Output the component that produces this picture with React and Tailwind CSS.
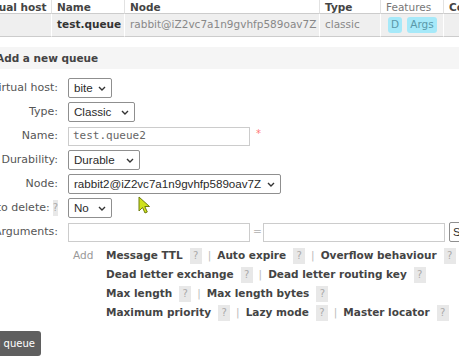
import React from "react";

const Chevron = () => (
  <svg width="8" height="5" viewBox="0 0 8 5" className="shrink-0">
    <path d="M1 1 L4 4 L7 1" fill="none" stroke="#333" strokeWidth="1.4" />
  </svg>
);

const Select = ({ children, w }) => (
  <div
    className={`flex h-[20px] items-center justify-between rounded-[2px] border border-[#8f8f8f] bg-white pl-[5px] pr-[5px] font-['Liberation_Sans',sans-serif] text-[11.6px] whitespace-nowrap text-[#2a2a2a] ${w}`}
  >
    <span>{children}</span>
    <Chevron />
  </div>
);

const Help = () => (
  <span className="inline-block h-[16px] w-[12px] bg-[#e8e8e8] text-center text-[10px] leading-[16px] font-normal text-[#aaa]">
    ?
  </span>
);

const Opt = ({ label }) => (
  <span className="flex items-center gap-[7px]">
    <span className="font-bold text-[#444]">{label}</span>
    <Help />
  </span>
);

const Sep = () => <span className="mx-[6px] text-[#bbb]">|</span>;

const Row = ({ label, help, children }) => (
  <div className="flex h-[24px] items-center">
    <div className="flex w-[58px] shrink-0 items-center justify-end gap-[3px] whitespace-nowrap text-[11px] text-[#555]">
      <span>{label}</span>
      {help && <Help />}
    </div>
    <div className="ml-[10px] flex items-center">{children}</div>
  </div>
);

const head = "h-[14px] leading-[14px] pl-[5px] border-r border-[#e2e2e2] border-b border-b-[#ccc] whitespace-nowrap";
const cell = "h-[23px] flex items-center pl-[5px] bg-[#efefef] border-r border-white border-b border-b-[#ccc] whitespace-nowrap";

export default function App() {
  return (
    <div className="relative h-[358px] w-[459px] overflow-hidden bg-white font-['DejaVu_Sans',sans-serif] text-[10.5px]">
      {/* queue table */}
      <div className="-ml-[28px] grid w-[520px] grid-cols-[80px_73px_195px_61px_63px_48px]">
        <div className={`${head} font-bold text-[#444]`}>Virtual host</div>
        <div className={`${head} font-bold text-[#444]`}>Name</div>
        <div className={`${head} font-bold text-[#444]`}>Node</div>
        <div className={`${head} font-bold text-[#444]`}>Type</div>
        <div className={`${head} text-[#777]`}>Features</div>
        <div className={`${head} font-bold text-[#444]`}>Consumers</div>

        <div className={cell}></div>
        <div className={`${cell} font-bold text-[#333]`}>test.queue</div>
        <div className={`${cell} text-[#888]`}>rabbit@iZ2vc7a1n9gvhfp589oav7Z</div>
        <div className={`${cell} text-[#888]`}>classic</div>
        <div className={`${cell} gap-[5px] pl-[7px]`}>
          <span className="flex h-[16px] w-[14px] items-center justify-center rounded-[3px] bg-[#a6e9f9] text-[#5a98a8]">D</span>
          <span className="flex h-[16px] w-[30px] items-center justify-center rounded-[3px] bg-[#a6e9f9] text-[#5a98a8]">Args</span>
        </div>
        <div className={cell}></div>
      </div>

      {/* section heading */}
      <div className="mt-[10px] flex h-[22px] items-center bg-[#f5f5f5] pt-[2px]">
        <span className="-ml-[4px] font-bold text-[#444]">Add a new queue</span>
      </div>

      {/* form */}
      <div className="mt-[7px]">
        <Row label="Virtual host:">
          <Select w="w-[44px]">bite</Select>
        </Row>
        <Row label="Type:">
          <Select w="w-[67px]">Classic</Select>
        </Row>
        <Row label="Name:">
          <div className="flex h-[19px] w-[182px] items-center border border-[#ccc] pl-[4px] font-['DejaVu_Sans_Mono',monospace] text-[11px] text-[#666]">
            test.queue2
          </div>
          <span className="ml-[6px] -mt-[6px] text-[10px] text-[#f77]">*</span>
        </Row>
        <Row label="Durability:">
          <Select w="w-[72px]">Durable</Select>
        </Row>
        <Row label="Node:">
          <Select w="w-[213px]">rabbit2@iZ2vc7a1n9gvhfp589oav7Z</Select>
        </Row>
        <Row label="Auto delete:" help>
          <Select w="w-[44px]">No</Select>
        </Row>
        <Row label="Arguments:">
          <div className="h-[19px] w-[182px] shrink-0 border border-[#ccc]"></div>
          <span className="mx-[3px] w-[7px] shrink-0 text-center text-[#bbb]">=</span>
          <div className="h-[19px] w-[182px] shrink-0 border border-[#ccc]"></div>
          <div className="ml-[4px] flex h-[20px] shrink-0 items-center rounded-[2px] border border-[#8f8f8f] pl-[3px] font-['Liberation_Sans',sans-serif] text-[11.6px] text-[#2a2a2a]">
            String
          </div>
        </Row>

        {/* argument shortcuts */}
        <div className="ml-[68px] mt-[2px] whitespace-nowrap">
          <div className="flex h-[19px] items-center">
            <span className="w-[38px] shrink-0 pl-[5px] text-[#999]">Add</span>
            <Opt label="Message TTL" />
            <Sep />
            <Opt label="Auto expire" />
            <Sep />
            <Opt label="Overflow behaviour" />
          </div>
          <div className="flex h-[19px] items-center pl-[38px]">
            <Opt label="Dead letter exchange" />
            <Sep />
            <Opt label="Dead letter routing key" />
          </div>
          <div className="flex h-[19px] items-center pl-[38px]">
            <Opt label="Max length" />
            <Sep />
            <Opt label="Max length bytes" />
          </div>
          <div className="flex h-[19px] items-center pl-[38px]">
            <Opt label="Maximum priority" />
            <Sep />
            <Opt label="Lazy mode" />
            <Sep />
            <Opt label="Master locator" />
          </div>
        </div>

        <button className="-ml-[25px] mt-[9px] flex h-[25px] items-center rounded-[3px] bg-[#5f5f5f] px-[6px] text-[10px] text-white">
          Add queue
        </button>
      </div>

      {/* mouse pointer */}
      <svg width="13" height="18" viewBox="0 0 13 18" className="absolute left-[138px] top-[196px]">
        <path d="M1 1 L1 15 L4.5 11.5 L7 17 L9.3 16 L6.8 10.5 L11.5 10.5 Z" fill="#cfe21c" stroke="#6f7d10" strokeWidth="1" strokeLinejoin="round" />
      </svg>
    </div>
  );
}
